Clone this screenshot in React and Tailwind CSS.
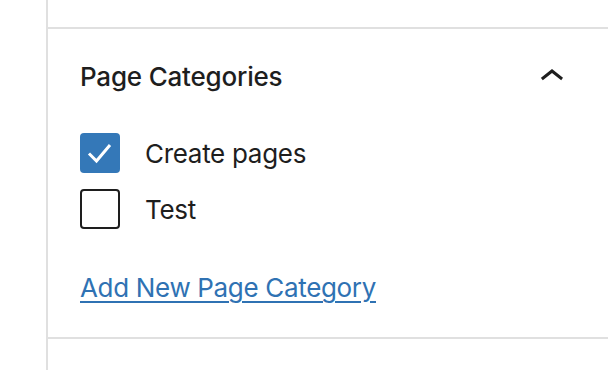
export default function App() {
  return (
    <div className="flex w-[608px] h-[370px] bg-white overflow-hidden text-[#1e1e1e]" style={{ fontFamily: 'Inter, "Noto Sans", sans-serif' }}>
      <div className="w-[46px] shrink-0" />
      <div className="flex-1 flex flex-col border-l-2 border-[#e0e0e0]">
        <div className="h-[29px] border-b-2 border-[#e0e0e0] shrink-0" />
        <div className="pt-[24px] pl-[32px] pr-[32px] pb-[30px] border-b-2 border-[#e0e0e0]">
          <div className="h-[48px] flex items-center justify-between">
            <h2 className="text-[26px] leading-[48px] font-medium tracking-[-0.2px]">Page Categories</h2>
            <svg width="48" height="48" viewBox="0 0 24 24" className="shrink-0">
              <path d="M6.5 12.4L12 8l5.5 4.4-.9 1.2L12 10l-4.6 3.6-1-1.2z" fill="#1e1e1e" />
            </svg>
          </div>
          <div className="mt-[32px] flex flex-col gap-[16px]">
            <label className="flex items-center h-[40px]">
              <span className="w-[40px] h-[40px] rounded-[4px] bg-[#3478b8] flex items-center justify-center shrink-0">
                <svg width="40" height="40" viewBox="0 0 40 40">
                  <polyline points="9,20.5 16.5,28 30,12" fill="none" stroke="#fff" strokeWidth="3" />
                </svg>
              </span>
              <span className="ml-[25px] text-[26px] leading-[40px] tracking-[-0.3px] translate-y-[1px]">Create pages</span>
            </label>
            <label className="flex items-center h-[40px]">
              <span className="w-[40px] h-[40px] rounded-[4px] border-2 border-[#1e1e1e] bg-white shrink-0" />
              <span className="ml-[25px] text-[26px] leading-[40px] tracking-[-0.3px] translate-y-[1px]">Test</span>
            </label>
          </div>
          <div className="mt-[38px] h-[40px] flex items-center">
            <a href="#" className="text-[26px] leading-[40px] text-[#2f72b3] underline underline-offset-[4px] decoration-2 tracking-[-0.33px] translate-y-[1px]">Add New Page Category</a>
          </div>
        </div>
        <div className="flex-1" />
      </div>
    </div>
  );
}
